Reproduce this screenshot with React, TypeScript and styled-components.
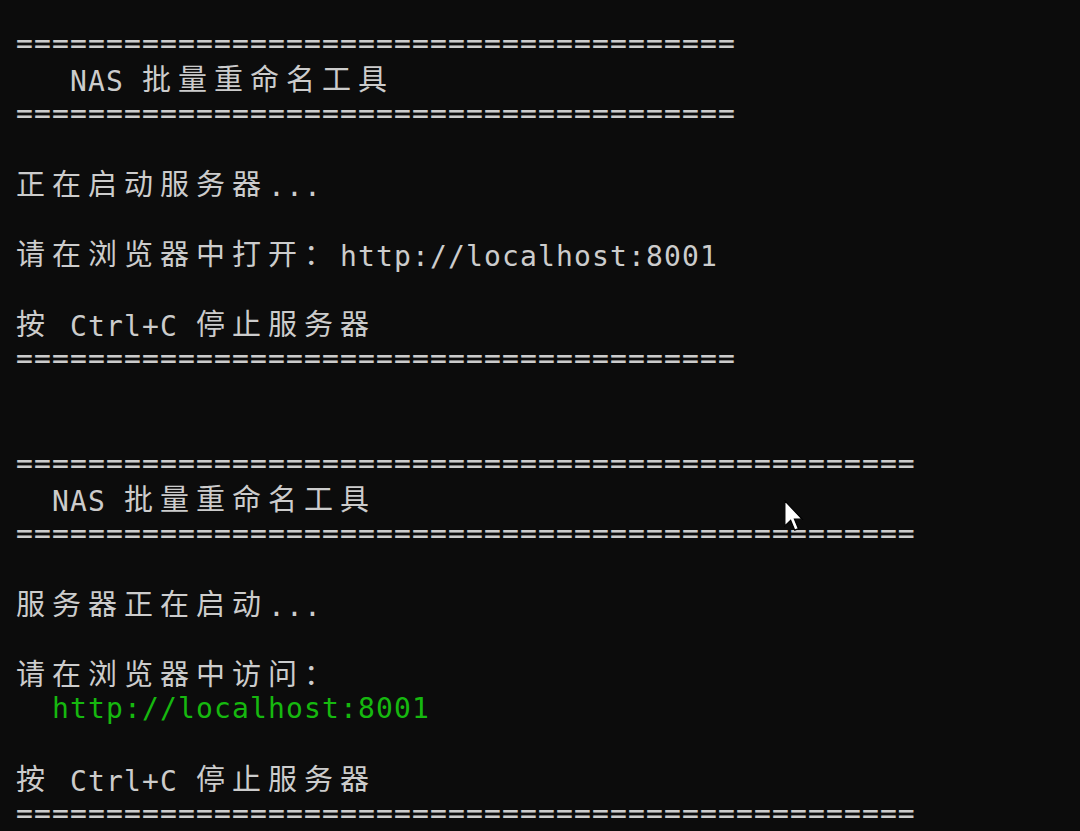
import React from "react";
import styled, { createGlobalStyle } from "styled-components";

const GlobalStyle = createGlobalStyle`
  html, body {
    margin: 0;
    padding: 0;
    background: #0c0c0c;
  }
`;

const Terminal = styled.div`
  position: relative;
  box-sizing: border-box;
  width: 1080px;
  height: 831px;
  overflow: hidden;
  padding: 26px 0 0 16px;
  background: #0c0c0c;
  color: #cccccc;
  font-family: "DejaVu Sans Mono", "Liberation Mono", monospace;
  font-size: 28px;
  letter-spacing: 1.14px;
`;

const Line = styled.div`
  height: 35px;
  line-height: 35px;
  white-space: pre;
`;

const Wide = styled.span`
  font-family: "Noto Sans CJK SC", "DejaVu Sans Mono", sans-serif;
  font-size: 29px;
  letter-spacing: 7px;
  position: relative;
  top: -1px;
`;

const Link = styled.span<{ $color: string }>`
  color: ${(p) => p.$color};
`;

const Pointer = styled.svg`
  position: absolute;
  left: 784px;
  top: 500px;
`;

const isWide = (ch: string) => {
  const c = ch.codePointAt(0) || 0;
  return (c >= 0x2e80 && c <= 0x9fff) || (c >= 0xff00 && c <= 0xff60);
};

const Runs: React.FC<{ text: string }> = ({ text }) => {
  const runs: { wide: boolean; s: string }[] = [];
  for (const ch of Array.from(text)) {
    const w = isWide(ch);
    const last = runs[runs.length - 1];
    if (last && last.wide === w) last.s += ch;
    else runs.push({ wide: w, s: ch });
  }
  return (
    <>
      {runs.map((r, i) =>
        r.wide ? <Wide key={i}>{r.s}</Wide> : <React.Fragment key={i}>{r.s}</React.Fragment>
      )}
    </>
  );
};

type Row = { text: string; green?: boolean };

const eq40 = "=".repeat(40);
const eq50 = "=".repeat(50);

const rows: Row[] = [
  { text: eq40 },
  { text: "   NAS 批量重命名工具" },
  { text: eq40 },
  { text: "" },
  { text: "正在启动服务器..." },
  { text: "" },
  { text: "请在浏览器中打开：http://localhost:8001" },
  { text: "" },
  { text: "按 Ctrl+C 停止服务器" },
  { text: eq40 },
  { text: "" },
  { text: "" },
  { text: eq50 },
  { text: "  NAS 批量重命名工具" },
  { text: eq50 },
  { text: "" },
  { text: "服务器正在启动..." },
  { text: "" },
  { text: "请在浏览器中访问：" },
  { text: "  http://localhost:8001", green: true },
  { text: "" },
  { text: "按 Ctrl+C 停止服务器" },
  { text: eq50 },
];

export default function App() {
  return (
    <>
      <GlobalStyle />
      <Terminal>
        {rows.map((r, i) => (
          <Line key={i}>
            {r.green ? (
              <Link $color="#16b80f">
                <Runs text={r.text} />
              </Link>
            ) : (
              <Runs text={r.text} />
            )}
          </Line>
        ))}
        <Pointer width="20" height="32" viewBox="0 0 13 21">
          <path
            d="M0.5 0.5 L0.5 17 L4.3 13.4 L7 19.8 L9.4 18.8 L6.8 12.6 L11.8 12.6 Z"
            fill="#ffffff"
            stroke="#000000"
            strokeWidth="0.8"
            strokeLinejoin="miter"
          />
        </Pointer>
      </Terminal>
    </>
  );
}
